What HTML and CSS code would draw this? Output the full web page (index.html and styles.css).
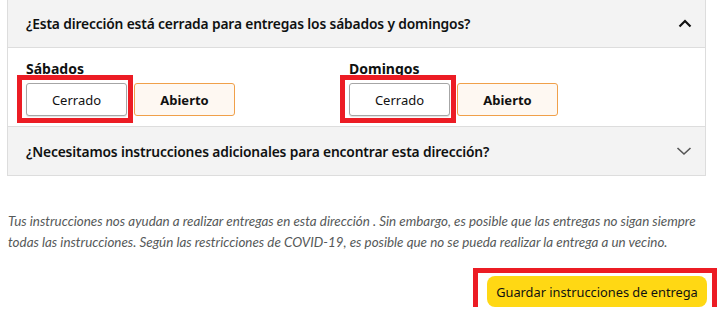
FILE: index.html
```html
<!DOCTYPE html>
<html lang="es">
<head>
<meta charset="utf-8">
<title>Instrucciones de entrega</title>
<link rel="stylesheet" href="styles.css">
</head>
<body>
<div class="panel">
  <div class="acc-head">
    <span class="acc-title">¿Esta dirección está cerrada para entregas los sábados y domingos?</span>
    <svg class="chev up" width="14" height="10" viewBox="0 0 14 10"><path d="M1.5 8.5 L7 3 L12.5 8.5" fill="none" stroke="#111" stroke-width="2.2"/></svg>
  </div>
  <div class="acc-body">
    <div class="day">
      <div class="day-label">Sábados</div>
      <div class="btns">
        <span class="mark-wrap"><button class="opt">Cerrado</button><span class="mark"></span></span>
        <button class="opt opt-sel">Abierto</button>
      </div>
    </div>
    <div class="day">
      <div class="day-label">Domingos</div>
      <div class="btns">
        <span class="mark-wrap"><button class="opt">Cerrado</button><span class="mark"></span></span>
        <button class="opt opt-sel">Abierto</button>
      </div>
    </div>
  </div>
  <div class="acc-head acc-last">
    <span class="acc-title">¿Necesitamos instrucciones adicionales para encontrar esta dirección?</span>
    <svg class="chev down" width="16" height="10" viewBox="0 0 16 10"><path d="M1.5 2 L8 8 L14.5 2" fill="none" stroke="#555" stroke-width="1.6"/></svg>
  </div>
</div>
<p class="note">Tus instrucciones nos ayudan a realizar entregas en esta dirección . Sin embargo, es posible que las entregas no sigan siempre todas las instrucciones. Según las restricciones de COVID-19, es posible que no se pueda realizar la entrega a un vecino.</p>
<div class="actions">
  <span class="mark-wrap"><button class="save">Guardar instrucciones de entrega</button><span class="mark mark-save"></span></span>
</div>
</body>
</html>
```
FILE: styles.css
```css
* { box-sizing: border-box; }
body {
  margin: 0;
  background: #fff;
  font-family: "Noto Sans", "Open Sans", sans-serif;
  color: #0f1111;
}
.panel {
  margin-left: 7px;
  width: 699px;
  border: 1px solid #dddddd;
  border-top: none;
}
.acc-head {
  height: 48px;
  background: #f3f3f3;
  border-bottom: 1px solid #dddddd;
  display: flex;
  align-items: center;
  justify-content: space-between;
  padding: 0 13px 0 18px;
}
.acc-last { height: 48px; border-bottom: none; }
.acc-title {
  font-size: 13.8px;
  font-weight: 600;
  letter-spacing: -0.15px;
}
.chev { display: block; }
.chev.up { margin-top: -2px; }
.acc-body {
  display: grid;
  grid-template-columns: 323px 1fr;
  padding: 12px 18px 10px 18px;
  border-bottom: 1px solid #dddddd;
}
.day-label {
  font-size: 14px;
  font-weight: 700;
  line-height: 18px;
  margin-bottom: 5px;
}
.btns { display: flex; gap: 7px; }
.opt {
  width: 101px;
  height: 33px;
  border-radius: 3px;
  border: 1px solid #a6a6a6;
  background: #fff;
  box-shadow: 0 1px 1px rgba(0,0,0,0.12);
  font-family: "Noto Sans", "Open Sans", sans-serif;
  font-size: 13px;
  color: #111;
  padding: 0;
  display: block;
}
.opt-sel {
  background: #fef8f2;
  border-color: #f0a04a;
  box-shadow: none;
  font-weight: 700;
}
.mark-wrap { position: relative; display: block; }
.mark {
  position: absolute;
  left: -9px;
  top: -8px;
  width: 116px;
  height: 48px;
  border: 5px solid #ec1c24;
  pointer-events: none;
}
.note {
  margin: 35px 0 0 8px;
  width: 700px;
  font-family: Lato, "Open Sans", sans-serif;
  font-style: italic;
  font-size: 13.4px;
  line-height: 21px;
  color: #565959;
}
.actions {
  display: flex;
  justify-content: flex-end;
  padding-right: 13px;
  margin-top: 23px;
}
.save {
  display: block;
  width: 220px;
  height: 31px;
  border: none;
  border-radius: 8px;
  background: #ffd814;
  font-family: "Noto Sans", "Open Sans", sans-serif;
  font-size: 12.8px;
  color: #0f1111;
  padding: 0;
}
.mark-save {
  left: -14px;
  top: -8px;
  width: 244px;
  height: 44px;
}
```
